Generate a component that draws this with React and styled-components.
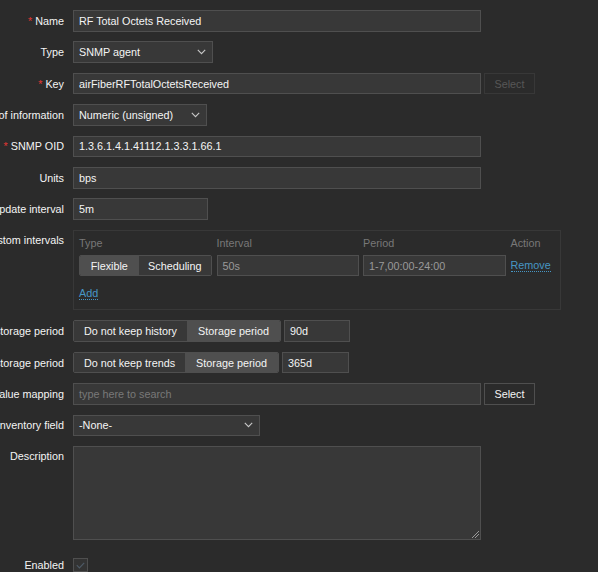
import React from 'react';
import styled, { createGlobalStyle } from 'styled-components';

const GlobalStyle = createGlobalStyle`
  html, body {
    margin: 0;
    background: #2b2b2b;
    overflow: hidden;
  }
  body {
    font-family: "Liberation Sans", Arial, sans-serif;
    font-size: 10.8px;
    color: #f2f2f2;
  }
`;

/* Layout */
const Form = styled.div`
  display: flex;
  flex-direction: column;
  gap: 9.8px;
  padding-top: 10px;
`;

const Row = styled.div`
  display: grid;
  grid-template-columns: 64px 1fr;
  column-gap: 9px;
  margin-top: ${(p) => p.$extraTop || 0}px;
  margin-bottom: ${(p) => p.$extraBottom || 0}px;
`;

const Label = styled.div`
  display: flex;
  justify-content: flex-end;
  align-items: ${(p) => (p.$top ? 'flex-start' : 'center')};
  padding-top: ${(p) => (p.$top ? '4px' : '0')};
  height: 21.6px;
  white-space: nowrap;
  color: #f4f4f4;
`;

const Star = styled.span`
  color: #e33734;
  margin-right: 3px;
`;

const Field = styled.div`
  display: flex;
  align-items: flex-start;
  gap: ${(p) => p.$gap ?? 3}px;
`;

/* Controls */
const TextInput = styled.div`
  box-sizing: border-box;
  width: ${(p) => p.$w}px;
  height: 21.6px;
  display: flex;
  align-items: center;
  padding: 0 5px;
  background: #383838;
  border: 1px solid #4f4f4f;
  color: ${(p) => (p.$muted ? '#9a9a9a' : p.$placeholder ? '#787878' : '#f4f4f4')};
  white-space: nowrap;
`;

const SelectBox = styled(TextInput)`
  justify-content: space-between;
  padding-right: 6px;
`;

const Button = styled.div`
  box-sizing: border-box;
  width: 51px;
  height: 21.6px;
  display: flex;
  align-items: center;
  justify-content: center;
  background: #2b2b2b;
  border: 1px solid ${(p) => (p.$disabled ? '#383838' : '#4f4f4f')};
  color: ${(p) => (p.$disabled ? '#575757' : '#f4f4f4')};
`;

const Segmented = styled.div`
  display: flex;
  height: 21.6px;
  box-sizing: border-box;
  border: 1px solid #4f4f4f;
  border-radius: 2px;
  overflow: hidden;
`;

const Segment = styled.div`
  display: flex;
  align-items: center;
  justify-content: center;
  width: ${(p) => p.$w}px;
  background: ${(p) => (p.$on ? '#4f4f4f' : '#383838')};
  color: #f4f4f4;
  white-space: nowrap;
`;

const IntervalBox = styled.div`
  box-sizing: border-box;
  width: 488px;
  height: 80px;
  border: 1px solid #383838;
  padding: 3px 5px 0 5px;
  display: grid;
  grid-template-columns: 133px 142px 143px auto;
  grid-template-rows: 18px 21.6px 28px;
  column-gap: 4.5px;
  row-gap: 3px;
  align-items: center;
`;

const Head = styled.div`
  color: #787878;
`;

const LinkText = styled.span`
  color: #4796c4;
  border-bottom: 1px dotted #4796c4;
  justify-self: start;
  line-height: 1.15;
`;

const TextArea = styled.div`
  box-sizing: border-box;
  width: 408px;
  height: 94px;
  background: #383838;
  border: 1px solid #4f4f4f;
  position: relative;
`;

const Grip = styled.svg`
  position: absolute;
  right: 1px;
  bottom: 1px;
`;

const Checkbox = styled.div`
  box-sizing: border-box;
  width: 15px;
  height: 14px;
  border: 1px solid #4f4f4f;
  background: #333333;
  display: flex;
  align-items: center;
  justify-content: center;
  margin-top: 3px;
`;

const Chevron = () => (
  <svg width="9" height="6" viewBox="0 0 9 6">
    <polyline points="0.8,0.8 4.5,4.6 8.2,0.8" fill="none" stroke="#c8c8c8" strokeWidth="1.1" />
  </svg>
);

const App = () => (
  <>
    <GlobalStyle />
    <Form>
      <Row>
        <Label><Star>*</Star>Name</Label>
        <Field><TextInput $w={408}>RF Total Octets Received</TextInput></Field>
      </Row>
      <Row>
        <Label>Type</Label>
        <Field><SelectBox $w={140}>SNMP agent<Chevron /></SelectBox></Field>
      </Row>
      <Row>
        <Label><Star>*</Star>Key</Label>
        <Field>
          <TextInput $w={408}>airFiberRFTotalOctetsReceived</TextInput>
          <Button $disabled>Select</Button>
        </Field>
      </Row>
      <Row>
        <Label>Type of information</Label>
        <Field><SelectBox $w={134}>Numeric (unsigned)<Chevron /></SelectBox></Field>
      </Row>
      <Row>
        <Label><Star>*</Star>SNMP OID</Label>
        <Field><TextInput $w={408}>1.3.6.1.4.1.41112.1.3.3.1.66.1</TextInput></Field>
      </Row>
      <Row>
        <Label>Units</Label>
        <Field><TextInput $w={408}>bps</TextInput></Field>
      </Row>
      <Row>
        <Label>Update interval</Label>
        <Field><TextInput $w={135}>5m</TextInput></Field>
      </Row>
      <Row $extraBottom={0.8}>
        <Label $top>Custom intervals</Label>
        <Field>
          <IntervalBox>
            <Head>Type</Head>
            <Head>Interval</Head>
            <Head>Period</Head>
            <Head>Action</Head>
            <Segmented>
              <Segment $w={59} $on>Flexible</Segment>
              <Segment $w={73}>Scheduling</Segment>
            </Segmented>
            <TextInput $w={142} $muted>50s</TextInput>
            <TextInput $w={143} $muted>1-7,00:00-24:00</TextInput>
            <LinkText>Remove</LinkText>
            <LinkText>Add</LinkText>
          </IntervalBox>
        </Field>
      </Row>
      <Row>
        <Label>History storage period</Label>
        <Field>
          <Segmented>
            <Segment $w={113}>Do not keep history</Segment>
            <Segment $w={93} $on>Storage period</Segment>
          </Segmented>
          <TextInput $w={66}>90d</TextInput>
        </Field>
      </Row>
      <Row>
        <Label>Trend storage period</Label>
        <Field>
          <Segmented>
            <Segment $w={111}>Do not keep trends</Segment>
            <Segment $w={93} $on>Storage period</Segment>
          </Segmented>
          <TextInput $w={67}>365d</TextInput>
        </Field>
      </Row>
      <Row>
        <Label>Value mapping</Label>
        <Field>
          <TextInput $w={408} $placeholder>type here to search</TextInput>
          <Button>Select</Button>
        </Field>
      </Row>
      <Row>
        <Label>Populates host inventory field</Label>
        <Field><SelectBox $w={187}>-None-<Chevron /></SelectBox></Field>
      </Row>
      <Row>
        <Label $top>Description</Label>
        <Field>
          <TextArea>
            <Grip width="8" height="8" viewBox="0 0 8 8">
              <line x1="1" y1="8" x2="8" y2="1" stroke="#9a9a9a" strokeWidth="1" />
              <line x1="4" y1="8" x2="8" y2="4" stroke="#9a9a9a" strokeWidth="1" />
            </Grip>
          </TextArea>
        </Field>
      </Row>
      <Row $extraTop={5.5}>
        <Label $top>Enabled</Label>
        <Field>
          <Checkbox>
            <svg width="9" height="7" viewBox="0 0 9 7">
              <polyline points="0.8,3.2 3.4,5.8 8.2,0.8" fill="none" stroke="#4e5a66" strokeWidth="1.2" />
            </svg>
          </Checkbox>
        </Field>
      </Row>
    </Form>
  </>
);

export default App;
